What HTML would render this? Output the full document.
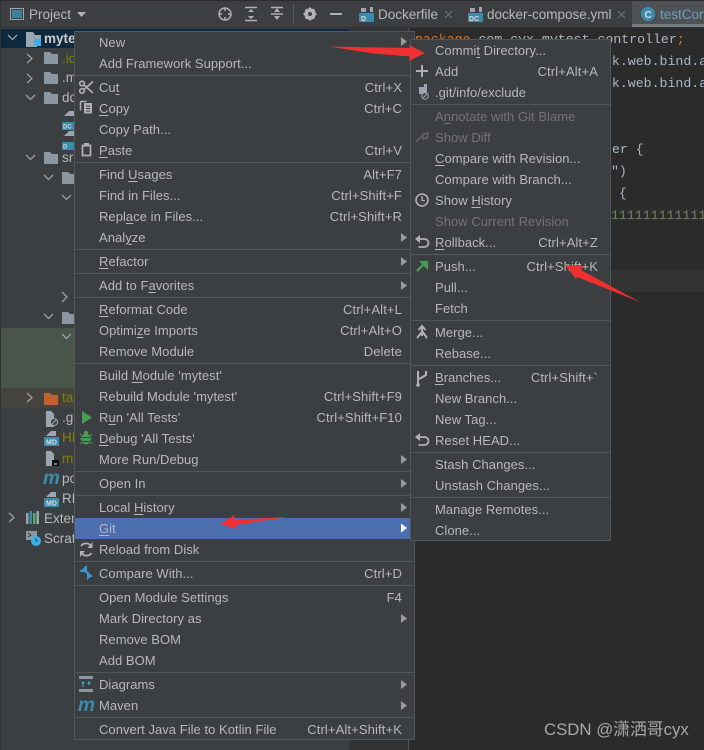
<!DOCTYPE html>
<html><head><meta charset="utf-8">
<style>
html,body{margin:0;padding:0;background:#2b2b2b}
#p{position:relative;width:704px;height:750px;overflow:hidden;background:#2b2b2b;font-family:"Liberation Sans","Noto Sans CJK SC",sans-serif;font-size:13px;color:#b6b8b9;letter-spacing:.04px}
#p div{position:absolute}
.i,.s,.t{line-height:21px;height:21px;white-space:nowrap}
.m .i,.n .i{left:24px}
.m .s,.n .s{right:12px;letter-spacing:.12px}
.d{color:#737373}
.l{height:1px;background:#515658;left:0;right:0}
u{text-underline-offset:2px;text-decoration-thickness:1px}
.t{font-size:13.5px;letter-spacing:0}
.c{font-family:"Liberation Mono",monospace;font-size:13.23px;letter-spacing:0;color:#a9b7c6;line-height:22px;white-space:pre}
</style></head><body>
<div id="p">
<div style="left:0;top:0;width:349px;height:750px;background:#3c3f41"></div>
<div style="left:349px;top:27px;width:59px;height:723px;background:#313335"></div>
<div style="left:408px;top:27px;width:1px;height:723px;background:#555"></div>
<div style="left:0;top:0;width:704px;height:27px;background:#3c3f41"></div>
<div style="left:0;top:27px;width:704px;height:1px;background:#323232"></div>
<div style="left:632px;top:0;width:72px;height:27px;background:#4e5254"></div>
<div style="left:632px;top:24px;width:72px;height:3px;background:#747a80"></div>
<div style="left:0;top:0;width:704px;height:1px;background:#2b2b2b"></div>
<div style="left:0;top:29px;width:349px;height:19px;background:#0d293e"></div>
<div style="left:0;top:328px;width:349px;height:60px;background:#49544a"></div>
<div style="left:0;top:388px;width:349px;height:20px;background:#45433d"></div>
<div style="left:0;top:0;width:1px;height:750px;background:#323232"></div>

<div class="t" style="left:29px;top:4px">Project</div>
<div class="t" style="left:378px;top:4px">Dockerfile</div>
<div class="t" style="left:487px;top:4px">docker-compose.yml</div>
<div class="t" style="left:660px;top:4px;color:#6c9fc0">testCon</div>

<div class="c" style="left:415px;top:29px"><span style="color:#cc7832">package</span> com.cyx.mytest.controller<span style="color:#cc7832">;</span></div>
<div class="c" style="left:604px;top:51px">rk.web.bind.a</div>
<div class="c" style="left:604px;top:73px">rk.web.bind.a</div>
<div class="c" style="left:612px;top:139px">er {</div>
<div class="c" style="left:611px;top:161px">")</div>
<div class="c" style="left:611px;top:183px"> {</div>
<div style="left:409px;top:270px;width:295px;height:22px;background:#323232"></div>
<div class="c" style="left:611px;top:205px;color:#6a8759">1111111111111</div>

<div class="t" style="left:44px;top:28px;font-weight:bold;color:#ccc">myte</div>
<div class="t" style="left:62px;top:48px;color:#808000">.id</div>
<div class="t" style="left:62px;top:67px">.m</div>
<div class="t" style="left:62px;top:87px">do</div>
<div class="t" style="left:62px;top:147px">sr</div>
<div class="t" style="left:62px;top:387px;color:#808000">ta</div>
<div class="t" style="left:62px;top:407px">.g</div>
<div class="t" style="left:62px;top:427px;color:#808000">HE</div>
<div class="t" style="left:62px;top:448px;color:#808000">my</div>
<div class="t" style="left:62px;top:468px">po</div>
<div class="t" style="left:62px;top:488px">RE</div>
<div class="t" style="left:44px;top:508px">Exter</div>
<div class="t" style="left:44px;top:528px">Scrat</div>

<div class="m" style="left:74px;top:31px;width:339px;height:707px;background:#3c3f41;border:1px solid #515658">
<div class="i" style="top:0">New</div>
<div class="i" style="top:21px">Add Framework Support...</div>
<div class="l" style="top:43px"></div>
<div class="i" style="top:45px">Cu<u>t</u></div><div class="s" style="top:45px">Ctrl+X</div>
<div class="i" style="top:66px"><u>C</u>opy</div><div class="s" style="top:66px">Ctrl+C</div>
<div class="i" style="top:87px">Copy Path...</div>
<div class="i" style="top:108px"><u>P</u>aste</div><div class="s" style="top:108px">Ctrl+V</div>
<div class="l" style="top:130px"></div>
<div class="i" style="top:132px">Find <u>U</u>sages</div><div class="s" style="top:132px">Alt+F7</div>
<div class="i" style="top:153px">Find in Files...</div><div class="s" style="top:153px">Ctrl+Shift+F</div>
<div class="i" style="top:174px">Repl<u>a</u>ce in Files...</div><div class="s" style="top:174px">Ctrl+Shift+R</div>
<div class="i" style="top:195px">Anal<u>y</u>ze</div>
<div class="l" style="top:217px"></div>
<div class="i" style="top:219px"><u>R</u>efactor</div>
<div class="l" style="top:241px"></div>
<div class="i" style="top:243px">Add to F<u>a</u>vorites</div>
<div class="l" style="top:265px"></div>
<div class="i" style="top:267px"><u>R</u>eformat Code</div><div class="s" style="top:267px">Ctrl+Alt+L</div>
<div class="i" style="top:288px">Optimi<u>z</u>e Imports</div><div class="s" style="top:288px">Ctrl+Alt+O</div>
<div class="i" style="top:309px">Remove Module</div><div class="s" style="top:309px">Delete</div>
<div class="l" style="top:331px"></div>
<div class="i" style="top:333px">Build <u>M</u>odule 'mytest'</div>
<div class="i" style="top:354px">Rebuild Module 'mytest'</div><div class="s" style="top:354px">Ctrl+Shift+F9</div>
<div class="i" style="top:375px">R<u>u</u>n 'All Tests'</div><div class="s" style="top:375px">Ctrl+Shift+F10</div>
<div class="i" style="top:396px"><u>D</u>ebug 'All Tests'</div>
<div class="i" style="top:417px">More Run/Debug</div>
<div class="l" style="top:439px"></div>
<div class="i" style="top:441px">Open In</div>
<div class="l" style="top:463px"></div>
<div class="i" style="top:465px">Local <u>H</u>istory</div>
<div style="left:0;top:486px;width:339px;height:21px;background:#4b6eaf"></div>
<div class="i" style="top:486px"><u>G</u>it</div>
<div class="i" style="top:507px">Reload from Disk</div>
<div class="l" style="top:529px"></div>
<div class="i" style="top:531px">Compare With...</div><div class="s" style="top:531px">Ctrl+D</div>
<div class="l" style="top:553px"></div>
<div class="i" style="top:555px">Open Module Settings</div><div class="s" style="top:555px">F4</div>
<div class="i" style="top:576px">Mark Directory as</div>
<div class="i" style="top:597px">Remove BOM</div>
<div class="i" style="top:618px">Add BOM</div>
<div class="l" style="top:640px"></div>
<div class="i" style="top:642px">Diagrams</div>
<div class="i" style="top:663px">Maven</div>
<div class="l" style="top:685px"></div>
<div class="i" style="top:687px">Convert Java File to Kotlin File</div><div class="s" style="top:687px">Ctrl+Alt+Shift+K</div>
</div>

<div class="n" style="left:410px;top:39px;width:199px;height:500px;background:#3c3f41;border:1px solid #515658">
<div class="i" style="top:0">Commi<u>t</u> Directory...</div>
<div class="i" style="top:21px">Add</div><div class="s" style="top:21px">Ctrl+Alt+A</div>
<div class="i" style="top:42px">.git/info/exclude</div>
<div class="l" style="top:64px"></div>
<div class="i d" style="top:66px">A<u>n</u>notate with Git Blame</div>
<div class="i d" style="top:87px">Show Diff</div>
<div class="i" style="top:108px"><u>C</u>ompare with Revision...</div>
<div class="i" style="top:129px">Compare with Branch...</div>
<div class="i" style="top:150px">Show <u>H</u>istory</div>
<div class="i d" style="top:171px">Show Current Revision</div>
<div class="i" style="top:192px"><u>R</u>ollback...</div><div class="s" style="top:192px">Ctrl+Alt+Z</div>
<div class="l" style="top:214px"></div>
<div class="i" style="top:216px">Push...</div><div class="s" style="top:216px">Ctrl+Shift+K</div>
<div class="i" style="top:237px">Pull...</div>
<div class="i" style="top:258px">Fetch</div>
<div class="l" style="top:280px"></div>
<div class="i" style="top:282px">Merge...</div>
<div class="i" style="top:303px">Rebase...</div>
<div class="l" style="top:325px"></div>
<div class="i" style="top:327px"><u>B</u>ranches...</div><div class="s" style="top:327px">Ctrl+Shift+`</div>
<div class="i" style="top:348px">New Branch...</div>
<div class="i" style="top:369px">New Tag...</div>
<div class="i" style="top:390px">Reset HEAD...</div>
<div class="l" style="top:412px"></div>
<div class="i" style="top:414px">Stash Changes...</div>
<div class="i" style="top:435px">Unstash Changes...</div>
<div class="l" style="top:457px"></div>
<div class="i" style="top:459px">Manage Remotes...</div>
<div class="i" style="top:480px">Clone...</div>
</div>

<div style="left:544px;top:719px;font-size:16.800px;letter-spacing:0;color:#a8a8a8;white-space:nowrap;line-height:22px">CSDN @潇洒哥cyx</div>

<svg width="704" height="750" viewBox="0 0 704 750" style="position:absolute;left:0;top:0" fill="none">
<!-- header -->
<rect x="10.500" y="8.500" width="13" height="11" stroke="#9aa7b0"/><rect x="12" y="10" width="10" height="8" fill="#40809e"/>
<path d="M77 12h9l-4.500 5z" fill="#afb1b3"/>
<circle cx="225" cy="14" r="6" stroke="#afb1b3" stroke-width="1.500"/><path d="M225 8v3M225 17v3M219 14h3M228 14h3" stroke="#afb1b3" stroke-width="1.500"/>
<path d="M245 7.500h12M245 20.500h12" stroke="#afb1b3" stroke-width="1.500"/><path d="M248 12l3-3 3 3zM248 16l3 3 3-3z" fill="#afb1b3"/>
<path d="M271 7.500h12M271 14h12" stroke="#afb1b3" stroke-width="1.500"/><path d="M274 12l3-4 3 4zM274 16h6l-3 4z" fill="#afb1b3"/>
<path d="M293.500 4v20" stroke="#555a5c"/>
<circle cx="310" cy="14" r="4" stroke="#afb1b3" stroke-width="3.500"/><path d="M310 7.500v13M303.500 14h13M305.500 9.500l9 9M314.500 9.500l-9 9" stroke="#afb1b3" stroke-width="2"/><circle cx="310" cy="14" r="2" fill="#3c3f41"/>
<path d="M330 14h12" stroke="#afb1b3" stroke-width="2"/>
<!-- tab icons -->
<path d="M361 8h5v4h4v-5h3v5h-12z" fill="#9aa7b0"/><rect x="359" y="13" width="15" height="9" fill="#3b8bac"/>
<text x="361" y="21" font-family="Liberation Sans" font-size="7" font-weight="bold" fill="#ddd">D</text>
<path d="M445 11l7 7M452 11l-7 7" stroke="#6e7072" stroke-width="1.200"/>
<path d="M470 8h5v4h4v-5h3v5h-12z" fill="#9aa7b0"/><rect x="468" y="13" width="15" height="9" fill="#3b8bac"/>
<text x="469" y="21" font-family="Liberation Sans" font-size="7" font-weight="bold" fill="#ddd">DC</text>
<path d="M618 11l7 7M625 11l-7 7" stroke="#6e7072" stroke-width="1.200"/>
<circle cx="648" cy="14" r="7" fill="#3b8bac"/>
<text x="644.500" y="18" font-family="Liberation Sans" font-size="10" font-weight="bold" fill="#dde">C</text>
<!-- tree chevrons -->
<g stroke="#9aa0a3" stroke-width="1.300">
<path d="M8 35l4.500 4.500L17 35M27 54l5 4.500-5 4.500M27 74l5 4.500-5 4.500M26 95l4.500 4.500L35 95M26 155l4.500 4.500L35 155M44 175l4.500 4.500L53 175M62 195l4.500 4.500L71 195M62 292l5 5-5 5M44 314l4.500 4.500L53 314M62 334l4.500 4.500L71 334M27 393l5 4.500-5 4.500M9 513l5 4.500-5 4.500"/>
</g>
<!-- tree folders -->
<path d="M26 32h7l2 3h6v7h-4v5H26z" fill="#9aa7b0"/><rect x="34" y="39" width="7" height="7" fill="#3cb0e8"/>
<g fill="#8b98a1">
<path d="M44 52h6l2 2h6v10H44z"/><path d="M44 72h6l2 2h6v10H44z"/><path d="M44 92h6l2 2h6v10H44z"/><path d="M44 152h6l2 2h6v10H44z"/>
<path d="M62 172h6l2 2h4v10H62z"/><path d="M62 312h6l2 2h4v10H62z"/>
</g>
<path d="M44 393h6l2 2h6v10H44z" fill="#c0622f"/>
<!-- file icons -->
<g fill="#9aa7b0">
<path d="M64 116l5-5h5v5z"/><path d="M64 136l5-5h5v5z"/>
<path d="M46 411h5l3 3v13h-8z"/>
<path d="M46 436l5-5h5v5z"/>
<path d="M46 451h5l3 3v12h-8z"/>
<path d="M46 497l5-5h5v5z"/>
</g>
<rect x="62" y="122" width="12" height="8" fill="#3b8bac"/><rect x="62" y="142" width="12" height="8" fill="#3b8bac"/>
<text x="63" y="128.500" font-family="Liberation Sans" font-size="6" font-weight="bold" fill="#ccc">DC</text>
<text x="63" y="148.500" font-family="Liberation Sans" font-size="6" font-weight="bold" fill="#ccc">D</text>
<circle cx="54" cy="422" r="3.500" fill="#3c3f41" stroke="#9aa7b0"/><path d="M52 424l4-4" stroke="#9aa7b0"/>
<rect x="44" y="437" width="15" height="9" fill="#3b8bac"/><text x="46" y="444.500" font-family="Liberation Sans" font-size="7" font-weight="bold" fill="#ddd">MD</text>
<rect x="52" y="460" width="7" height="6" fill="#111"/><path d="M54 464h3" stroke="#ddd"/>
<text x="43" y="484" font-family="Liberation Sans" font-size="19" font-weight="bold" font-style="italic" fill="#3b8bac">m</text>
<rect x="44" y="498" width="15" height="9" fill="#3b8bac"/><text x="46" y="505.500" font-family="Liberation Sans" font-size="7" font-weight="bold" fill="#ddd">MD</text>
<rect x="26" y="513" width="2.500" height="11" fill="#9aa7b0"/><rect x="29.500" y="511" width="2.500" height="13" fill="#3b8bac"/><rect x="33" y="513" width="2.500" height="11" fill="#59a869"/><rect x="36.500" y="511" width="2.500" height="13" fill="#9aa7b0"/>
<path d="M26 531h11v9H26z" fill="#8b98a1"/><path d="M28 533l3 2-3 2" stroke="#3c3f41"/><circle cx="36" cy="541" r="5" fill="#3cb0e8"/><path d="M36 538v3h2" stroke="#1c4a60"/>
<!-- menu icons -->
<g stroke="#afb1b3" stroke-width="1.600">
<circle cx="82" cy="91" r="2.300"/><circle cx="82" cy="83.500" r="2.300"/><path d="M84 85l9 8M84 89.500l9-8"/>
</g>
<path d="M80.500 101.500h6M80.500 101.500v9" stroke="#afb1b3" stroke-width="1.500"/>
<path d="M84 103h8v10.500h-8z" fill="#afb1b3"/><path d="M86 106h4M86 108.500h4M86 111h4" stroke="#3c3f41"/>
<path d="M82.500 145.500h8v10h-8z" stroke="#afb1b3" stroke-width="1.700"/><rect x="84" y="143" width="5" height="3.500" fill="#afb1b3"/>
<!-- run / debug -->
<path d="M82 411l10 6.500-10 6.500z" fill="#499c54"/>
<ellipse cx="86" cy="439" rx="4.500" ry="5.500" fill="#499c54"/><circle cx="86" cy="433" r="2.200" fill="#499c54"/><path d="M80 434l2 2M92 434l-2 2M80 439h12M80 444l2-2M92 444l-2-2" stroke="#499c54" stroke-width="1.100"/><path d="M82.500 437.500h7M82.500 441.500h7" stroke="#3c3f41"/>
<!-- reload -->
<path d="M91.500 547a6 6 0 0 0-10.500-1M81 552a6 6 0 0 0 10.500 1" stroke="#afb1b3" stroke-width="1.800"/><path d="M92.500 542v6h-5zM80 557v-6h5z" fill="#afb1b3"/>
<!-- compare -->
<path d="M86 571h-6M87 576h5" stroke="#3b97d3" stroke-width="2"/><path d="M87 565v9l-5-4.500zM87 571v9l5-4.500z" fill="#3b97d3"/>
<!-- diagrams -->
<path d="M79 677.500h14M79 690.500h14" stroke="#8b98a1" stroke-width="3"/><path d="M83 681l-2 2.500h4zM89 681l-2 2.500h4z" fill="#3cb0e8"/><path d="M83 683v4M89 683v2" stroke="#3cb0e8"/>
<text x="78" y="711" font-family="Liberation Sans" font-size="19" font-weight="bold" font-style="italic" fill="#3b8bac">m</text>
<!-- main arrows -->
<path d="M401 37v9l6-4.500zM401 233v9l6-4.500zM401 257v9l6-4.500zM401 281v9l6-4.500zM401 455v9l6-4.500zM401 479v9l6-4.500zM401 503v9l6-4.500zM401 614v9l6-4.500zM401 680v9l6-4.500zM401 701v9l6-4.500z" fill="#9a9a9a"/>
<path d="M401 523.500v9l6-4.500z" fill="#fff"/>
<!-- submenu icons -->
<path d="M422 65v12M416 71h12" stroke="#afb1b3" stroke-width="2"/>
<path d="M419 87h5v-3h3v10h-8z" fill="#9aa7b0"/><circle cx="425" cy="96" r="3.300" fill="#3c3f41" stroke="#9aa7b0"/><path d="M423 98l4-4" stroke="#9aa7b0"/>
<path d="M416 142l5-5M423 134l5-1-1 5-4 1zM421 136l2 2" stroke="#5b5d5f" stroke-width="2"/>
<circle cx="422" cy="200" r="6" stroke="#afb1b3" stroke-width="1.600"/><path d="M422 196v4.500h3" stroke="#afb1b3" stroke-width="1.300"/>
<path d="M418 239h6.500a4 4 0 0 1 0 8h-6" stroke="#afb1b3" stroke-width="1.800"/><path d="M420 235l-5 4 5 4z" fill="#afb1b3"/>
<path d="M417 271l9-9" stroke="#499c54" stroke-width="2.500"/><path d="M419 261h9v9z" fill="#499c54"/>
<path d="M422 326v10M422 332l-5 6M422 331l5 7M418.500 330l3.500-4 3.500 4" stroke="#afb1b3" stroke-width="2"/>
<path d="M418 371v13M426 371v4l-7 4" stroke="#afb1b3" stroke-width="2"/><circle cx="418" cy="385" r="1.800" fill="#afb1b3"/>
<path d="M418 437h6.500a4 4 0 0 1 0 8h-6" stroke="#afb1b3" stroke-width="1.800"/><path d="M420 433l-5 4 5 4z" fill="#afb1b3"/>
<!-- red arrows -->
<path d="M329 46.500l81 1.500-1-3 16 8-16 8 1-4.500-37-3z" fill="#f03030"/>
<path d="M565 265l19 1-3 4 59 32-63-25-1 2z" fill="#f03030"/>
<path d="M220 524l15-9-1 5 53-3-51 8 1 4z" fill="#f03030"/>
</svg>
</div>
</body></html>
